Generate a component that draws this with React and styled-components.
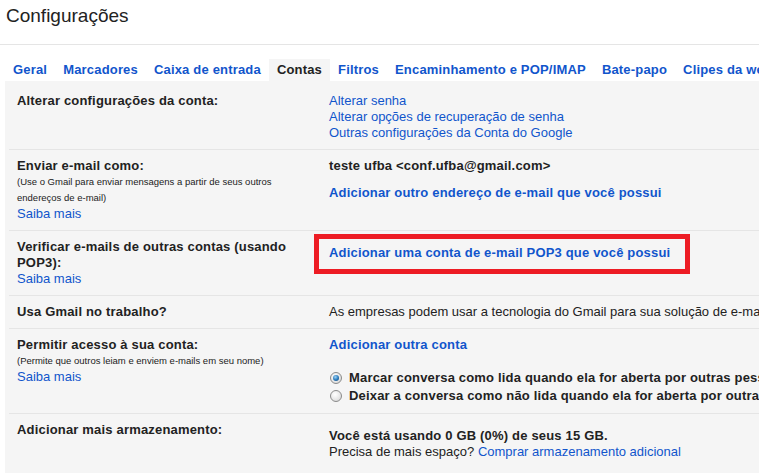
import React from "react";
import styled, { createGlobalStyle, css } from "styled-components";

const GlobalStyle = createGlobalStyle`
  html, body {
    margin: 0;
    padding: 0;
    background: #fff;
    overflow: hidden;
  }
  body {
    font-family: "Liberation Sans", Arial, sans-serif;
    font-size: 13px;
    color: #222;
  }
`;

const TABS = [
  "Geral",
  "Marcadores",
  "Caixa de entrada",
  "Contas",
  "Filtros",
  "Encaminhamento e POP/IMAP",
  "Bate-papo",
  "Clipes da web",
  "Labs",
  "Off-line",
  "Temas",
];

const App = () => {
  return (
    <Page>
      <GlobalStyle />
      <Title>Configurações</Title>
      <Separator />

      <TabBar>
        {TABS.map((tab) => (
          <Tab key={tab} $active={tab === "Contas"}>
            {tab}
          </Tab>
        ))}
      </TabBar>

      <Panel>
        <Row>
          <Label>
            <Heading>Alterar configurações da conta:</Heading>
          </Label>
          <Value>
            <Line>
              <Link href="#">Alterar senha</Link>
            </Line>
            <Line>
              <Link href="#">Alterar opções de recuperação de senha</Link>
            </Line>
            <Line>
              <Link href="#">Outras configurações da Conta do Google</Link>
            </Line>
          </Value>
        </Row>

        <Row>
          <Label>
            <Heading>Enviar e-mail como:</Heading>
            <Hint>
              (Use o Gmail para enviar mensagens a partir de seus outros
              endereços de e-mail)
            </Hint>
            <Line>
              <Link href="#">Saiba mais</Link>
            </Line>
          </Label>
          <Value>
            <Line $bold>teste ufba &lt;conf.ufba@gmail.com&gt;</Line>
            <Line $gap={11}>
              <Link href="#" $bold>
                Adicionar outro endereço de e-mail que você possui
              </Link>
            </Line>
          </Value>
        </Row>

        <Row>
          <Label>
            <Heading>Verificar e-mails de outras contas (usando POP3):</Heading>
            <Line>
              <Link href="#">Saiba mais</Link>
            </Line>
          </Label>
          <Value>
            <Highlight>
              <Link href="#" $bold>
                Adicionar uma conta de e-mail POP3 que você possui
              </Link>
            </Highlight>
          </Value>
        </Row>

        <Row>
          <Label>
            <Heading>Usa Gmail no trabalho?</Heading>
          </Label>
          <Value>
            <Line>
              As empresas podem usar a tecnologia do Gmail para sua solução de
              e-mail corporativo.
            </Line>
          </Value>
        </Row>

        <Row>
          <Label>
            <Heading>Permitir acesso à sua conta:</Heading>
            <Hint>(Permite que outros leiam e enviem e-mails em seu nome)</Hint>
            <Line>
              <Link href="#">Saiba mais</Link>
            </Line>
          </Label>
          <Value>
            <Line>
              <Link href="#" $bold>
                Adicionar outra conta
              </Link>
            </Line>
            <Options>
              <Option>
                <RadioDot $checked />
                Marcar conversa como lida quando ela for aberta por outras
                pessoas
              </Option>
              <Option>
                <RadioDot />
                Deixar a conversa como não lida quando ela for aberta por outras
                pessoas
              </Option>
            </Options>
          </Value>
        </Row>

        <Row>
          <Label>
            <Heading>Adicionar mais armazenamento:</Heading>
          </Label>
          <Value $offset={6}>
            <Line $bold>Você está usando 0 GB (0%) de seus 15 GB.</Line>
            <Line>
              Precisa de mais espaço?{" "}
              <Link href="#">Comprar armazenamento adicional</Link>
            </Line>
          </Value>
        </Row>
      </Panel>
    </Page>
  );
};

export default App;

// bold Arial renders a touch wider on the original platform
const boldText = css`
  font-weight: bold;
  letter-spacing: 0.18px;
`;

const Page = styled.div`
  width: 1100px;
  min-height: 473px;
`;

const Title = styled.h1`
  margin: 0;
  padding: 6px 0 0 6px;
  font-size: 19px;
  font-weight: normal;
  line-height: 20px;
  color: #222;
`;

const Separator = styled.div`
  margin-top: 18px;
  height: 1px;
  background: #e5e5e5;
`;

const TabBar = styled.div`
  display: flex;
  margin: 14px 0 0 5px;
  white-space: nowrap;
`;

const Tab = styled.div`
  ${boldText}
  padding: 0 8px;
  height: 22px;
  line-height: 22px;
  color: ${(p) => (p.$active ? "#222" : "#15c")};
  background: ${(p) => (p.$active ? "#f5f5f5" : "transparent")};
  cursor: pointer;
`;

const Panel = styled.div`
  margin-left: 5px;
  padding: 4px 4px 20px;
  background: #f5f5f5;
`;

const Row = styled.div`
  display: grid;
  grid-template-columns: 312px 1fr;
  & + & {
    border-top: 1px solid #e5e5e5;
  }
`;

const Label = styled.div`
  padding: 8px 24px 8px 8px;
  line-height: 16px;
`;

const Heading = styled.div`
  ${boldText}
`;

const Hint = styled.div`
  font-size: 9.5px;
  line-height: 16px;
`;

const Value = styled.div`
  padding: ${(p) => 8 + (p.$offset || 0)}px 8px 8px;
  line-height: 16px;
  white-space: nowrap;
`;

const Line = styled.div`
  margin-top: ${(p) => p.$gap || 0}px;
  ${(p) => p.$bold && boldText}
`;

const Link = styled.a`
  color: #15c;
  text-decoration: none;
  ${(p) => p.$bold && boldText}
`;

const Highlight = styled.div`
  display: inline-block;
  margin: -5px 0 0 -15px;
  padding: 6px 15px 8px 10px;
  border: 5px solid #ed1c24;
`;

const Options = styled.div`
  margin-top: 16px;
`;

const Option = styled.div`
  ${boldText}
  display: flex;
  align-items: center;
  height: 18px;
`;

const RadioDot = styled.span`
  position: relative;
  box-sizing: border-box;
  width: 12px;
  height: 12px;
  margin: 0 7px 0 1px;
  border: 1px solid #8b8b8b;
  border-radius: 50%;
  background: radial-gradient(circle at 40% 35%, #ffffff 0%, #e8e8e8 55%, #cfcfcf 100%);
  flex: none;

  &::after {
    content: "";
    display: ${(p) => (p.$checked ? "block" : "none")};
    position: absolute;
    left: 2px;
    top: 2px;
    width: 6px;
    height: 6px;
    border-radius: 50%;
    background: radial-gradient(circle at 40% 35%, #9fd4f5 0%, #2f7fc0 50%, #0d3f6e 100%);
  }
`;
